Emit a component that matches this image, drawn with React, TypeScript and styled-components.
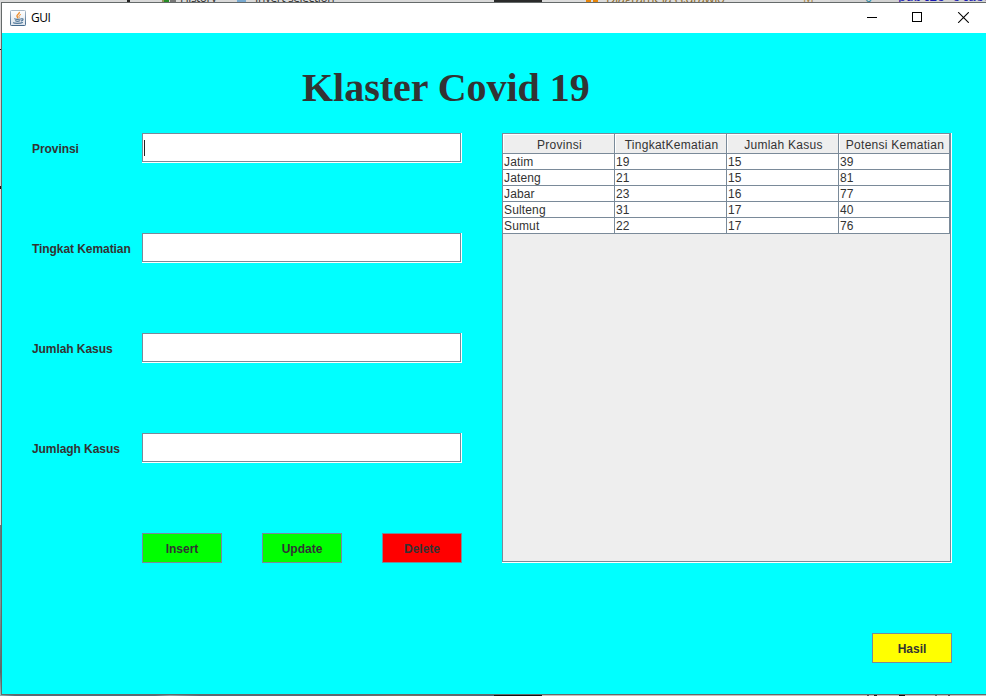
import React, { useState } from "react";
import styled, { createGlobalStyle } from "styled-components";

const GlobalStyle = createGlobalStyle`
  * { box-sizing: border-box; }
  html, body { margin: 0; padding: 0; overflow: hidden; }
`;

const line = "#7a8a99";
const ink = "#333333";

const Screen = styled.div`
  width: 986px;
  height: 696px;
  display: grid;
  grid-template-columns: 1px 985px;
  grid-template-rows: 2px 693px 1px;
  overflow: hidden;
`;

const TopStrip = styled.div`
  grid-column: 1 / -1;
  position: relative;
  overflow: hidden;
  background: linear-gradient(90deg, #d9d9d9 0 494px, #2a2a2a 494px 542px, #dcdcdc 542px 830px, #d2d2d2 830px);
`;

const StripText = styled.span<{ $x: number; $color: string; $mono?: boolean; $size?: number; $spacing?: number }>`
  position: absolute;
  left: ${(p) => p.$x}px;
  bottom: -3px;
  white-space: pre;
  color: ${(p) => p.$color};
  letter-spacing: ${(p) => p.$spacing ?? 0}px;
  font: ${(p) => p.$size ?? 12}px/14px ${(p) => (p.$mono ? '"Liberation Mono", monospace' : '"Open Sans", sans-serif')};
`;

const StripMark = styled.span<{ $x: number; $w: number; $color: string }>`
  position: absolute;
  top: 0;
  left: ${(p) => p.$x}px;
  width: ${(p) => p.$w}px;
  height: 2px;
  background: ${(p) => p.$color};
`;

const SideStrip = styled.div`
  background: linear-gradient(180deg, #d7d7d7 0 47px, #111 47px 48px, #d3d0ce 48px 184px, #111 184px 187px, #e3dcda 187px 523px, #607b7c 523px 540px, #829796 600px, #566b6a 670px, #9ebbbb 693px);
`;

const BottomStrip = styled.div`
  grid-column: 1 / -1;
  background: linear-gradient(90deg, #91aeb1 0, #576b77 15px 155px, #90a0a4 170px, #596874 200px 350px, #777565 400px, #4d6477 490px 494px, #181414 494px 542px, #c8bfb9 542px 867px, #555 867px 869px, #c5c1bd 869px 874px, #222 874px 877px, #c5c1bd 877px 899px, #111 899px 905px, #c5c1bd 905px 935px, #666 935px 937px, #c5c1bd 937px 948px, #555 948px 950px, #c5c1bd 950px);
`;

const Frame = styled.div`
  display: flex;
  flex-direction: column;
  border: 1px solid #656a6a;
  border-right: 0;
  background: #00ffff;
`;

const TitleBar = styled.header`
  display: flex;
  align-items: center;
  flex: 0 0 30px;
  padding-left: 8px;
  background: #fff;
`;

const Caption = styled.span`
  flex: 1;
  margin-left: 5px;
  font: 12px/16px "Open Sans", sans-serif;
  letter-spacing: -0.45px;
  color: #000;
`;

const WindowButton = styled.button`
  width: 46px;
  height: 30px;
  padding: 9px 0 0;
  border: 0;
  background: transparent;
  display: flex;
  align-items: flex-start;
  justify-content: center;
`;

const Controls = styled.div`
  display: flex;
`;

const Content = styled.main`
  display: flex;
  flex-direction: column;
  padding: 29px 34px 0 30px;
`;

const Heading = styled.h1`
  margin: 0;
  height: 71px;
  padding-left: 270px;
  font: bold 40px/52px "Liberation Serif", serif;
  letter-spacing: -0.03px;
  white-space: nowrap;
  color: ${ink};
`;

const Columns = styled.div`
  display: flex;
  justify-content: space-between;
`;

const Form = styled.form`
  width: 430px;
  display: flex;
  flex-direction: column;
  gap: 70px;
`;

const Field = styled.label`
  display: grid;
  grid-template-columns: 110px 320px;
  grid-template-rows: 30px;
  height: 30px;
  font: bold 12px/33px "Liberation Sans", Arial, sans-serif;
  color: ${ink};
`;

const Label = styled.span`
  white-space: nowrap;
  letter-spacing: -0.07px;
`;

const Etched = styled.div`
  display: flex;
  border-right: 1px solid #fff;
  border-bottom: 1px solid #fff;
`;

const InputBox = styled.div`
  flex: 1;
  display: flex;
  align-items: center;
  border: 1px solid ${line};
  background: #fff;
`;

const Caret = styled.i`
  flex: 0 0 1px;
  height: 16px;
  margin-left: 1px;
  background: #222;
`;

const Input = styled.input`
  flex: 1;
  min-width: 0;
  height: 26px;
  padding: 0 2px;
  border: 0;
  outline: 0;
  background: transparent;
  font: 12px "Liberation Sans", Arial, sans-serif;
`;

const Actions = styled.div`
  display: flex;
  justify-content: space-between;
  padding-left: 110px;
`;

const ActionButton = styled.button<{ $fill: string }>`
  width: 80px;
  height: 30px;
  padding: 2px 0 0;
  border: 1px solid ${line};
  background: ${(p) => p.$fill};
  color: ${ink};
  font: bold 12px/26px "Liberation Sans", Arial, sans-serif;
`;

const ScrollPane = styled(Etched)`
  width: 450px;
  height: 430px;
`;

const Viewport = styled.div`
  flex: 1;
  border: 1px solid ${line};
  background: #eeeeee;
`;

const Table = styled.div`
  display: grid;
  grid-template-columns: 112px 112px 112px 111px;
  font: 12px/15px "Liberation Sans", Arial, sans-serif;
  color: ${ink};
`;

const HeaderCell = styled.div`
  height: 20px;
  border-right: 1px solid ${line};
  border-bottom: 1px solid ${line};
  box-shadow: inset 1px 1px 0 #fff;
  padding: 0 0 0 2px;
  line-height: 22px;
  letter-spacing: 0.27px;
  text-align: center;
  white-space: nowrap;
`;

const Cell = styled.div`
  height: 16px;
  padding-left: 1px;
  border-right: 1px solid ${line};
  border-bottom: 1px solid ${line};
  background: #fff;
  line-height: 16px;
  letter-spacing: 0.15px;
`;

const Footer = styled.div`
  display: flex;
  justify-content: flex-end;
  margin-top: 70px;
`;

const headers = ["Provinsi", "TingkatKematian", "Jumlah Kasus", "Potensi Kematian"];
const rows = [
  ["Jatim", "19", "15", "39"],
  ["Jateng", "21", "15", "81"],
  ["Jabar", "23", "16", "77"],
  ["Sulteng", "31", "17", "40"],
  ["Sumut", "22", "17", "76"],
];
const fields = ["Provinsi", "Tingkat Kematian", "Jumlah Kasus", "Jumlagh Kasus"];

function JavaIcon() {
  return (
    <svg width="16" height="16" viewBox="0 0 16 16">
      <defs>
        <linearGradient id="javaTile" x1="0" y1="0" x2="0" y2="1">
          <stop offset="0" stopColor="#fff" />
          <stop offset="1" stopColor="#dce4ec" />
        </linearGradient>
        <linearGradient id="javaEdge" x1="0" y1="0" x2="0" y2="1">
          <stop offset="0" stopColor="#a9b9c8" />
          <stop offset="1" stopColor="#42688c" />
        </linearGradient>
      </defs>
      <rect x="0.5" y="0.5" width="15" height="15" rx="0.8" fill="url(#javaTile)" stroke="url(#javaEdge)" />
      <g fill="none" strokeLinecap="round">
        <path d="M9.3 2.4C9.6 4.2 6.2 4.5 7 6.4L7.9 8" stroke="#ed8a26" strokeWidth="1.3" />
        <path d="M10.6 4.6C8.4 5.5 8.6 6.2 9.3 7.4" stroke="#ed8a26" strokeWidth="1" />
        <path d="M4.6 8.8C4.6 9.5 9 9.5 10.4 9M5.5 10.8C6.5 11.3 8.8 11.2 9.8 10.8M11.4 8.8C13.8 8.4 13.4 10.4 11.4 10.9M3.7 12.7C3.6 13.6 10.8 13.6 12.4 12.6" stroke="#52799b" strokeWidth="1.2" />
      </g>
    </svg>
  );
}

export default function App() {
  const [values, setValues] = useState(["", "", "", ""]);
  return (
    <Screen>
      <GlobalStyle />
      <TopStrip>
        <StripMark $x={127} $w={3} $color="#222" />
        <StripMark $x={162} $w={6} $color="#93935a" />
        <StripMark $x={164} $w={5} $color="#258c25" />
        <StripMark $x={170} $w={6} $color="#777" />
        <StripText $x={180} $color="#333" $spacing={-0.5}>History</StripText>
        <StripMark $x={237} $w={9} $color="#78a9d0" />
        <StripText $x={255} $color="#333" $spacing={-0.4}>Invert selection</StripText>
        <StripMark $x={586} $w={5} $color="#e88509" />
        <StripMark $x={593} $w={5} $color="#e88509" />
        <StripText $x={606} $color="#8d6a2b" $size={13} $spacing={-0.5}>DiagramClass.drawio</StripText>
        <StripText $x={803} $color="#a78242">M</StripText>
        <StripText $x={865} $color="#2686a1">6</StripText>
        <StripText $x={898} $color="#1717b0" $mono $size={13}>public class</StripText>
      </TopStrip>
      <SideStrip />
      <Frame>
        <TitleBar>
          <JavaIcon />
          <Caption>GUI</Caption>
          <Controls>
            <WindowButton aria-label="Minimize">
              <svg width="12" height="11"><path d="M2 5.5H12" stroke="#000" /></svg>
            </WindowButton>
            <WindowButton aria-label="Maximize">
              <svg width="10" height="10"><rect x="0.5" y="0.5" width="9" height="9" fill="none" stroke="#000" /></svg>
            </WindowButton>
            <WindowButton aria-label="Close">
              <svg width="12" height="11"><path d="M1.2 0.2L11.8 10.8M11.8 0.2L1.2 10.8" stroke="#000" strokeWidth="1.1" /></svg>
            </WindowButton>
          </Controls>
        </TitleBar>
        <Content>
          <Heading>Klaster Covid 19</Heading>
          <Columns>
            <Form onSubmit={(e) => e.preventDefault()}>
              {fields.map((name, i) => (
                <Field key={name}>
                  <Label>{name}</Label>
                  <Etched>
                    <InputBox>
                      {i === 0 && <Caret />}
                      <Input
                        value={values[i]}
                        onChange={(e) => setValues(values.map((v, n) => (n === i ? e.target.value : v)))}
                      />
                    </InputBox>
                  </Etched>
                </Field>
              ))}
              <Actions>
                <ActionButton $fill="#00ff00">Insert</ActionButton>
                <ActionButton $fill="#00ff00">Update</ActionButton>
                <ActionButton $fill="#ff0000">Delete</ActionButton>
              </Actions>
            </Form>
            <ScrollPane>
              <Viewport>
                <Table>
                  {headers.map((h) => <HeaderCell key={h}>{h}</HeaderCell>)}
                  {rows.flatMap((row) => row.map((c, i) => <Cell key={row[0] + i}>{c}</Cell>))}
                </Table>
              </Viewport>
            </ScrollPane>
          </Columns>
          <Footer>
            <ActionButton $fill="#ffff00">Hasil</ActionButton>
          </Footer>
        </Content>
      </Frame>
      <BottomStrip />
    </Screen>
  );
}
